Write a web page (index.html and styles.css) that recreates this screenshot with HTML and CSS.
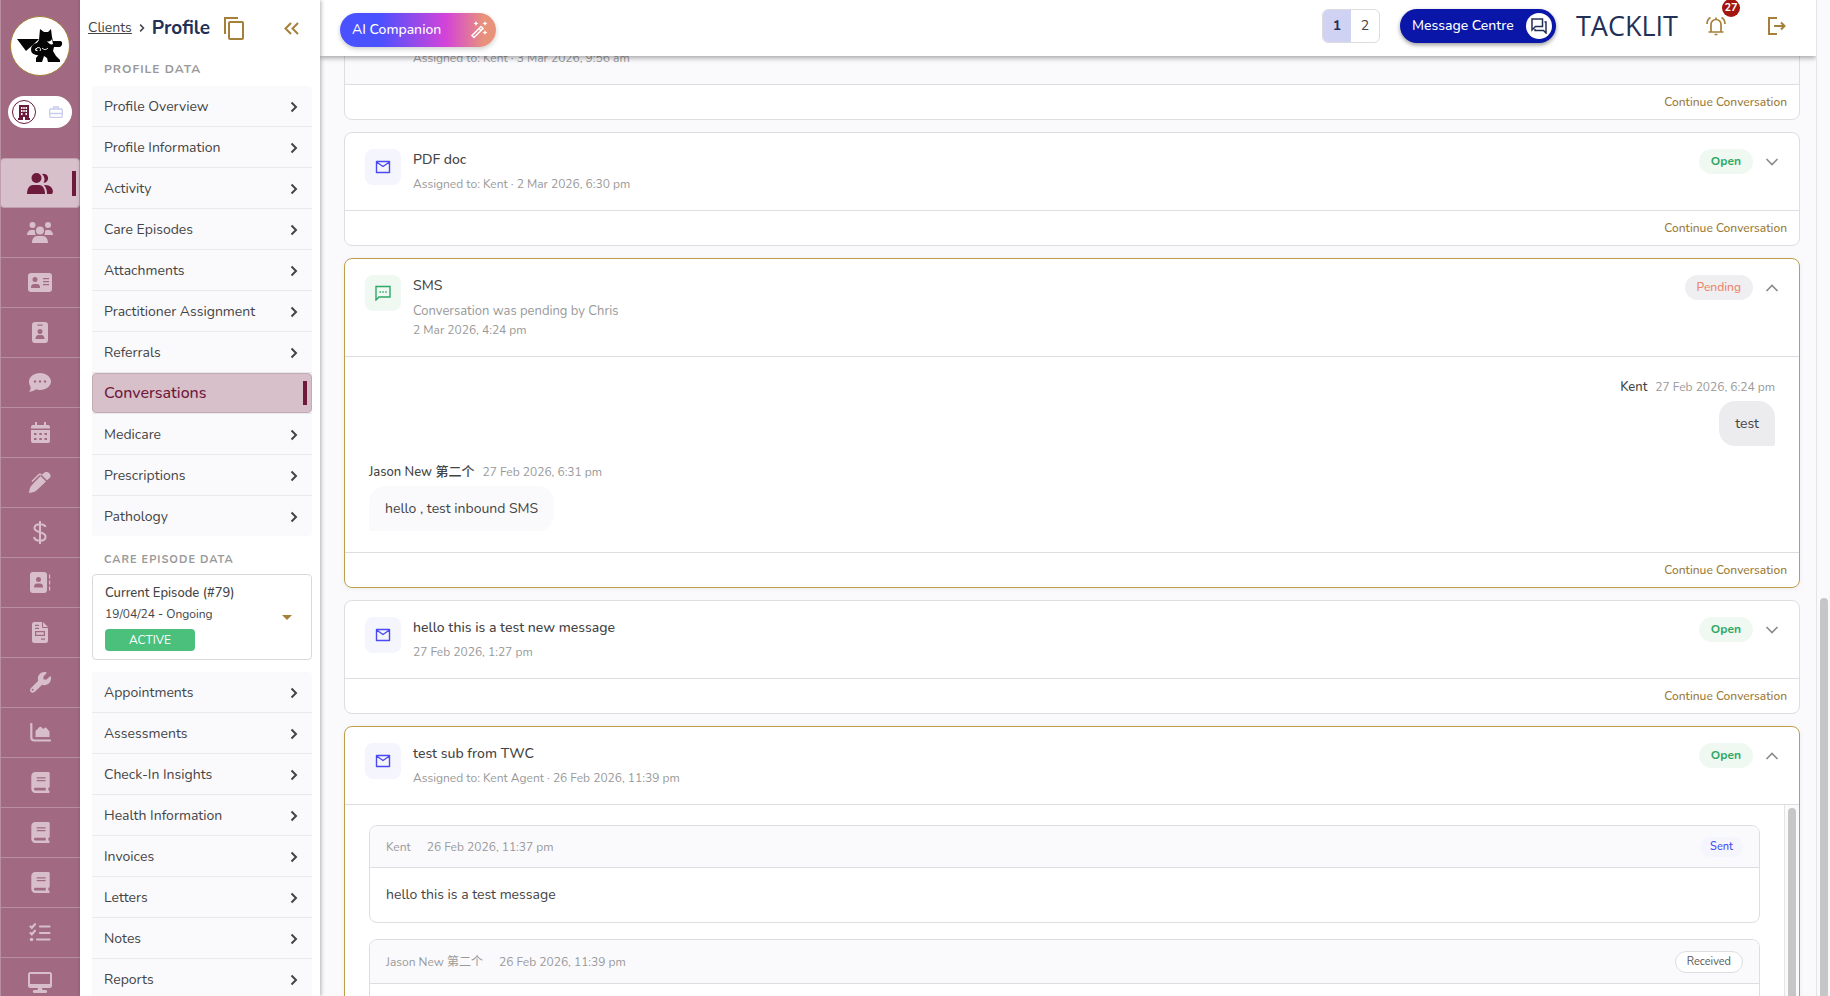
FILE: index.html
```
<!DOCTYPE html>
<html lang="en">
<head>
    <meta charset="utf-8" />
    <meta name="viewport" content="width=device-width, initial-scale=1.0">
    <title>Profile - Conversations</title>
    <link rel="stylesheet" href="styles.css">
</head>
<body>
    <!-- icons used more than once -->
    <svg class="sprite" aria-hidden="true">
        <symbol id="chevron" viewBox="0 0 8 12"><path d="M1.500 1.500 6 6l-4.500 4.500" fill="none" stroke="#444" stroke-width="2"/></symbol>
        <symbol id="mail" viewBox="0 0 16 16"><path d="M1.500 2.500h13v11h-13zM1.500 3l6.500 4.500L14.500 3" fill="none" stroke="#4a4af5" stroke-width="1.400" stroke-linejoin="round"/></symbol>
        <symbol id="down" viewBox="0 0 14 8"><path d="M1.500 1 7 6.500 12.500 1" fill="none" stroke="#8c8c8c" stroke-width="1.700"/></symbol>
        <symbol id="up" viewBox="0 0 14 8"><path d="M1.500 7 7 1.500 12.500 7" fill="none" stroke="#8c8c8c" stroke-width="1.700"/></symbol>
        <symbol id="book" viewBox="0 0 448 512"><path fill="currentColor" d="M96 0C43 0 0 43 0 96v320c0 53 43 96 96 96h320c18 0 32-14 32-32s-14-32-32-32v-64c18 0 32-14 32-32V32c0-18-14-32-32-32H96zm0 384h256v64H96c-18 0-32-14-32-32s14-32 32-32zm32-240c0-9 7-16 16-16h192c9 0 16 7 16 16s-7 16-16 16H144c-9 0-16-7-16-16zm16 48h192c9 0 16 7 16 16s-7 16-16 16H144c-9 0-16-7-16-16s7-16 16-16z"/></symbol>
    </svg>

    <nav class="rail">
        <a class="avatar" href="#" aria-label="Home">
            <svg width="46" height="34" viewBox="0 0 46 34">
                <path fill="#050505" d="M0 10h22L18 14l-9 8z"/>
                <path fill="#050505" d="M22 11 23 0l4 3h4l3-3 1 8 1 4h7c2 0 2.500 2 2 3.500-.500 2-2 2.500-3 2.500h-5l-1 4 3 5 4 4v2H31l-1-4-3-2-2 6h-6v-4l4-5-6-6z"/>
                <path fill="none" stroke="#050505" stroke-width="4" d="M24 16c-4-1-8 1-8 4.500s5 5 8 2"/>
                <path fill="none" stroke="#fff" d="M19 20c2-3 6-1 4 2M25 19c2 2 4 2 6 0"/>
                <path fill="#fff" d="M30 12c2 1 4 0 5-2l1 5c-2 1-4 0-6-3z"/>
            </svg>
        </a>
        <div class="switch">
            <button class="switch-btn on" aria-label="Organisation"><svg width="12" height="15" viewBox="0 0 12 15"><path fill="#6e1a3b" fill-rule="evenodd" d="M1 0h10v13h1v2H7v-3H5v3H0v-2h1zM3 2v2h1.500V2zm2.300 0v2h1.400V2zM7.500 2v2H9V2zM3 5v2h1.500V5zm2.300 0v2h1.400V5zM7.500 5v2H9V5zM3 8v2h1.500V8zm4.500 0v2H9V8z"/></svg></button>
            <button class="switch-btn" aria-label="Practice"><svg width="14" height="12" viewBox="0 0 14 12" fill="none" stroke="#c9cbef" stroke-width="1.300"><rect x=".7" y="3" width="12.600" height="8.300" rx="1"/><path d="M4.500 3V1h5v2M1 7.500h12"/></svg></button>
        </div>
        <ul class="rail-list">
            <li><a class="active" href="#" aria-label="Clients"><svg width="26" height="21" viewBox="0 0 26 21" fill="currentColor"><circle cx="9.500" cy="5" r="5"/><path d="M15 1a4.500 4.500 0 1 1 1.500 8.700A7 7 0 0 0 15 1zM0 21c0-5 2-9 6-9h6c4 0 6 4 6 9zm20 0c0-3-.500-6-3-9 6-.500 9 3 9 7l-1 2z"/></svg></a></li>
            <li><a href="#" aria-label="Groups"><svg width="26" height="21" viewBox="0 0 26 21" fill="currentColor"><circle cx="5.500" cy="3" r="3"/><circle cx="21" cy="3" r="3"/><circle cx="13" cy="8.500" r="4"/><path d="M0 13c0-3 2-5 4-5h3c1 0 1 1 1 1 0 2 0 3 1 4zm26 0c0-3-2-5-4-5h-3l-1 1c0 2 0 3-1 4zM5 21c0-4 2-7 5-7h6c3 0 5 3 5 7z"/></svg></a></li>
            <li><a href="#" aria-label="Contacts"><svg width="24" height="19" viewBox="0 0 24 19"><path fill="currentColor" fill-rule="evenodd" d="M3 0h18a3 3 0 0 1 3 3v13a3 3 0 0 1-3 3H3a3 3 0 0 1-3-3V3a3 3 0 0 1 3-3zm4 4a2.500 2.500 0 1 0 0 5 2.500 2.500 0 0 0 0-5zM3 15h9c0-3-1-4-3-4H6c-2 0-3 1-3 4zM15 5v1.200h6V5zm0 3v1.200h6V8zm0 3v1.200h6V11z"/></svg></a></li>
            <li><a href="#" aria-label="Practitioners"><svg width="16" height="21" viewBox="0 0 16 21"><path fill="currentColor" fill-rule="evenodd" d="M3 0h10a3 3 0 0 1 3 3v15a3 3 0 0 1-3 3H3a3 3 0 0 1-3-3V3a3 3 0 0 1 3-3zm2.500 2.500v1.200h5V2.500zM8 7a2.500 2.500 0 1 0 0 5 2.500 2.500 0 0 0 0-5zM3.500 17h9c0-2-1-4-3-4h-3c-2 0-3 2-3 4z"/></svg></a></li>
            <li><a href="#" aria-label="Messages"><svg width="22" height="19" viewBox="0 0 22 19"><path fill="currentColor" fill-rule="evenodd" d="M11 0c6 0 11 4 11 8.500S17 17 11 17c-1.500 0-3-.300-4-.800-2 1.500-4 2.500-7 2.500 1-1 2-3 1.500-5C.500 12 0 10.500 0 8.500 0 4 5 0 11 0zM6 7.300a1.200 1.200 0 1 0 0 2.500 1.200 1.200 0 0 0 0-2.500zm5 0a1.200 1.200 0 1 0 0 2.500 1.200 1.200 0 0 0 0-2.500zm5 0a1.200 1.200 0 1 0 0 2.500 1.200 1.200 0 0 0 0-2.500z"/></svg></a></li>
            <li><a href="#" aria-label="Calendar"><svg width="19" height="21" viewBox="0 0 19 21"><path fill="currentColor" fill-rule="evenodd" d="M4 0h2v3h7V0h2v3h2a2 2 0 0 1 2 2v1.500H0V5a2 2 0 0 1 2-2h2zM0 8h19v11a2 2 0 0 1-2 2H2a2 2 0 0 1-2-2zm3 3v2h2.500v-2zm5.300 0v2h2.500v-2zm5.200 0v2H16v-2zM3 16v2h2.500v-2zm5.300 0v2h2.500v-2zm5.200 0v2H16v-2z"/></svg></a></li>
            <li><a href="#" aria-label="Notes"><svg width="22" height="21" viewBox="0 0 22 21" fill="currentColor"><path d="M15 1c2-2 4-1 5.500.500S22 5 20.500 6L18 8.300 12.600 3zM11.500 4l5.500 5.500L8 18c-2 2-4 2.500-8 3 .500-4 1-6 3-8z"/><path d="M3 9.500 9.500 3c1-1 2-1 3 0" fill="none" stroke="currentColor" stroke-width="1.500"/></svg></a></li>
            <li><a href="#" aria-label="Billing"><svg width="14" height="23" viewBox="0 0 14 23"><path d="M7 0v23M12.500 6C12 4 10 3.200 7 3.200S1.500 4.500 1.500 7c0 5.500 11 3 11 8.500 0 3-2.500 4.300-5.500 4.300S1.500 18.500 1 16" fill="none" stroke="currentColor" stroke-width="2"/></svg></a></li>
            <li><a href="#" aria-label="Address book"><svg width="21" height="21" viewBox="0 0 21 21"><path fill="currentColor" fill-rule="evenodd" d="M3 0h11a3 3 0 0 1 3 3v15a3 3 0 0 1-3 3H3a3 3 0 0 1-3-3V3a3 3 0 0 1 3-3zm5.500 5a2.500 2.500 0 1 0 0 5 2.500 2.500 0 0 0 0-5zM4 15.500h9c0-3-1-4-3-4H7c-2 0-3 1-3 4zM19 2.500h1.200v4H19zm0 6h1.200v4H19zm0 6h1.200v4H19z"/></svg></a></li>
            <li><a href="#" aria-label="Invoices"><svg width="16" height="21" viewBox="0 0 16 21"><path fill="currentColor" fill-rule="evenodd" d="M2.500 0H10v4.500c0 1 .500 1.500 1.500 1.500H16v12.500a2.500 2.500 0 0 1-2.500 2.500h-11A2.500 2.500 0 0 1 0 18.500v-16A2.500 2.500 0 0 1 2.500 0zM11 0l5 5h-4.500a.5.5 0 0 1-.5-.5zM3 2.700v1.200h4V2.700zm0 3v1.200h4V5.700zm0 3.300v5h10V9zm1.200 1.200h7.600v2.600H4.200zM9 16.500v1.200h4v-1.200z"/></svg></a></li>
            <li><a href="#" aria-label="Settings"><svg width="21" height="21" viewBox="0 0 512 512"><path fill="currentColor" fill-rule="evenodd" d="M352 320c88 0 160-72 160-160 0-15-2-30-6-44-4-12-18-14-27-5l-68 68c-3 3-7 5-11 5h-56c-9 0-16-7-16-16v-56c0-4 2-8 5-11l68-68c9-9 7-23-5-27-14-4-29-6-44-6-88 0-160 72-160 160 0 19 3 37 9 54L19 396c-25 25-25 67 0 92s67 25 92 0l187-177c17 6 35 9 54 9zM64 456a24 24 0 1 1 0-48 24 24 0 0 1 0 48z"/></svg></a></li>
            <li><a href="#" aria-label="Analytics"><svg width="21" height="19" viewBox="0 0 21 19"><path fill="currentColor" d="M5.500 14V8l4-4c1-.700 2 0 2.500 1l1.500 1 1-1c1-.800 1.500-.500 2 0l3 3.500V14z"/><path d="M1.300 1v13.500c0 2 1 3 3 3H20" fill="none" stroke="currentColor" stroke-width="2.200" stroke-linecap="round"/></svg></a></li>
            <li><a href="#" aria-label="Library"><svg width="19" height="21"><use href="#book"/></svg></a></li>
            <li><a href="#" aria-label="Resources"><svg width="19" height="21"><use href="#book"/></svg></a></li>
            <li><a href="#" aria-label="Guides"><svg width="19" height="21"><use href="#book"/></svg></a></li>
            <li><a href="#" aria-label="Tasks"><svg width="22" height="19" viewBox="0 0 22 19" fill="none" stroke="currentColor" stroke-width="2.200" stroke-linecap="round"><path d="m1.500 3.500 1.300 1.300L6 1.200M1.500 10l1.300 1.300L6 7.700M11 3.500h9.500M11 10h9.500M8 16.500h12.500"/><path stroke-width="3.500" d="M2.500 16.500h.100"/></svg></a></li>
            <li><a href="#" aria-label="Devices"><svg width="24" height="21" viewBox="0 0 24 21"><path fill="currentColor" fill-rule="evenodd" d="M2.500 0h19A2.500 2.500 0 0 1 24 2.500v11a2.500 2.500 0 0 1-2.500 2.500H14l.500 2H18c1.500 0 1.500 3 0 3H6c-1.500 0-1.500-3 0-3h3.500l.500-2H2.500A2.500 2.500 0 0 1 0 13.500v-11A2.500 2.500 0 0 1 2.500 0zM2 2v10h20V2z"/></svg></a></li>
        </ul>
    </nav>

    <aside class="panel">
        <div class="crumbs">
            <a href="#">Clients</a>
            <svg width="6" height="10"><use href="#chevron"/></svg>
            <h1>Profile</h1>
            <button class="copy" aria-label="Copy"><svg width="20" height="23" viewBox="0 0 20 23" fill="none" stroke="#a5803a" stroke-width="2"><path d="M1 17V1h13"/><rect x="5" y="5" width="14" height="17" rx="1"/></svg></button>
            <button class="collapse" aria-label="Collapse"><svg width="15" height="13" viewBox="0 0 15 13" fill="none" stroke="#a5803a" stroke-width="2"><path d="M7 1 1.500 6.500 7 12M14 1 8.500 6.500 14 12"/></svg></button>
        </div>
        <h2>PROFILE DATA</h2>
        <ul class="menu">
            <li><a href="#">Profile Overview<svg width="8" height="12"><use href="#chevron"/></svg></a></li>
            <li><a href="#">Profile Information<svg width="8" height="12"><use href="#chevron"/></svg></a></li>
            <li><a href="#">Activity<svg width="8" height="12"><use href="#chevron"/></svg></a></li>
            <li><a href="#">Care Episodes<svg width="8" height="12"><use href="#chevron"/></svg></a></li>
            <li><a href="#">Attachments<svg width="8" height="12"><use href="#chevron"/></svg></a></li>
            <li><a href="#">Practitioner Assignment<svg width="8" height="12"><use href="#chevron"/></svg></a></li>
            <li><a href="#">Referrals<svg width="8" height="12"><use href="#chevron"/></svg></a></li>
            <li><a class="active" href="#">Conversations</a></li>
            <li><a href="#">Medicare<svg width="8" height="12"><use href="#chevron"/></svg></a></li>
            <li><a href="#">Prescriptions<svg width="8" height="12"><use href="#chevron"/></svg></a></li>
            <li><a href="#">Pathology<svg width="8" height="12"><use href="#chevron"/></svg></a></li>
        </ul>
        <h2 class="second">CARE EPISODE DATA</h2>
        <button class="episode">
            <span class="episode-text">
                <span class="episode-name">Current Episode (#79)</span>
                <span class="episode-date">19/04/24 - Ongoing</span>
                <span class="episode-status">ACTIVE</span>
            </span>
            <svg width="10" height="5" viewBox="0 0 10 5"><path d="M0 0h10L5 5z" fill="#a5803a"/></svg>
        </button>
        <ul class="menu">
            <li><a href="#">Appointments<svg width="8" height="12"><use href="#chevron"/></svg></a></li>
            <li><a href="#">Assessments<svg width="8" height="12"><use href="#chevron"/></svg></a></li>
            <li><a href="#">Check-In Insights<svg width="8" height="12"><use href="#chevron"/></svg></a></li>
            <li><a href="#">Health Information<svg width="8" height="12"><use href="#chevron"/></svg></a></li>
            <li><a href="#">Invoices<svg width="8" height="12"><use href="#chevron"/></svg></a></li>
            <li><a href="#">Letters<svg width="8" height="12"><use href="#chevron"/></svg></a></li>
            <li><a href="#">Notes<svg width="8" height="12"><use href="#chevron"/></svg></a></li>
            <li><a href="#">Reports<svg width="8" height="12"><use href="#chevron"/></svg></a></li>
        </ul>
    </aside>

    <main class="main">
        <header class="topbar">
            <button class="ai">AI Companion
                <svg width="18" height="18" viewBox="0 0 18 18" fill="none" stroke="#fff" stroke-width="1.500"><path d="m2 14.500 9-9 2 2-9 9zM9 7.500l2 2"/><path fill="#fff" stroke="none" d="m6 0 .8 1.700L8.500 2.500l-1.700.8L6 5l-.8-1.700-1.700-.8 1.700-.8zM15 0l.8 1.700 1.700.8-1.700.8L15 5l-.8-1.700-1.700-.8 1.700-.8zM15 9l.8 1.700 1.700.8-1.700.8L15 14l-.8-1.700-1.700-.8 1.700-.8z"/></svg>
            </button>
            <div class="pages">
                <button class="on">1</button>
                <button>2</button>
            </div>
            <button class="centre">Message Centre
                <span class="centre-icon"><svg width="16" height="16" viewBox="0 0 16 16" fill="none" stroke="#233056" stroke-width="1.500"><path d="M1 12V1h10.500v7.500H4.500zM13.500 4H15v11l-2.500-2.500H4V11"/></svg></span>
            </button>
            <span class="brand">TACKLIT</span>
            <button class="bell" aria-label="Notifications">
                <svg width="20" height="20" viewBox="0 0 20 20" fill="none" stroke="#a5803a" stroke-width="1.700"><path d="M2.500 16h15M5 16V8.500a5 5 0 0 1 10 0V16M10 1.500v2M1 8c0-3 1-5 3.500-6.500M19 8c0-3-1-5-3.500-6.500M8.500 18.500h3"/></svg>
                <span class="badge">27</span>
            </button>
            <button class="logout" aria-label="Log out"><svg width="18" height="18" viewBox="0 0 18 18" fill="none" stroke="#a5803a" stroke-width="2"><path d="M9 1H1v16h8M6 9h10M13 5.500 16.500 9 13 12.500"/></svg></button>
        </header>

        <div class="list">
            <article class="card unread">
                <div class="card-head">
                    <span class="kind"></span>
                    <div class="info">
                        <p>Assigned to: Kent · 3 Mar 2026, 9:56 am</p>
                    </div>
                </div>
                <div class="card-foot"><a href="#">Continue Conversation</a></div>
            </article>

            <article class="card">
                <div class="card-head">
                    <span class="kind mail"><svg width="16" height="16"><use href="#mail"/></svg></span>
                    <div class="info">
                        <h3>PDF doc</h3>
                        <p>Assigned to: Kent · 2 Mar 2026, 6:30 pm</p>
                    </div>
                    <span class="status open">Open</span>
                    <button class="toggle" aria-label="Expand"><svg width="14" height="8"><use href="#down"/></svg></button>
                </div>
                <div class="card-foot"><a href="#">Continue Conversation</a></div>
            </article>

            <article class="card expanded">
                <div class="card-head">
                    <span class="kind sms"><svg width="16" height="16" viewBox="0 0 16 16" fill="none" stroke="#2fa866" stroke-width="1.400"><path d="M1 15V1.500h14V12H4z"/><path d="M4.500 7H6M7.300 7h1.500M10.200 7h1.500" stroke-width="1.600"/></svg></span>
                    <div class="info">
                        <h3>SMS</h3>
                        <p class="event">Conversation was pending by Chris</p>
                        <p>2 Mar 2026, 4:24 pm</p>
                    </div>
                    <span class="status pending">Pending</span>
                    <button class="toggle" aria-label="Collapse"><svg width="14" height="8"><use href="#up"/></svg></button>
                </div>
                <div class="chat">
                    <div class="bubble-row mine">
                        <p class="who"><b>Kent</b>27 Feb 2026, 6:24 pm</p>
                        <p class="bubble">test</p>
                    </div>
                    <div class="bubble-row">
                        <p class="who"><b>Jason New 第二个</b>27 Feb 2026, 6:31 pm</p>
                        <p class="bubble">hello , test inbound SMS</p>
                    </div>
                </div>
                <div class="card-foot"><a href="#">Continue Conversation</a></div>
            </article>

            <article class="card">
                <div class="card-head">
                    <span class="kind mail"><svg width="16" height="16"><use href="#mail"/></svg></span>
                    <div class="info">
                        <h3>hello this is a test new message</h3>
                        <p>27 Feb 2026, 1:27 pm</p>
                    </div>
                    <span class="status open">Open</span>
                    <button class="toggle" aria-label="Expand"><svg width="14" height="8"><use href="#down"/></svg></button>
                </div>
                <div class="card-foot"><a href="#">Continue Conversation</a></div>
            </article>

            <article class="card expanded">
                <div class="card-head">
                    <span class="kind mail"><svg width="16" height="16"><use href="#mail"/></svg></span>
                    <div class="info">
                        <h3>test sub from TWC</h3>
                        <p>Assigned to: Kent Agent · 26 Feb 2026, 11:39 pm</p>
                    </div>
                    <span class="status open">Open</span>
                    <button class="toggle" aria-label="Collapse"><svg width="14" height="8"><use href="#up"/></svg></button>
                </div>
                <div class="thread">
                    <div class="mails">
                        <section class="email">
                            <div class="email-head"><span>Kent</span><span>26 Feb 2026, 11:37 pm</span><span class="tag sent">Sent</span></div>
                            <p>hello this is a test message</p>
                        </section>
                        <section class="email">
                            <div class="email-head tall"><span>Jason New 第二个</span><span>26 Feb 2026, 11:39 pm</span><span class="tag received">Received</span></div>
                            <p></p>
                        </section>
                    </div>
                    <div class="track"><div class="thumb"></div></div>
                </div>
            </article>
        </div>
    </main>
    <div class="track page-track"><div class="thumb"></div></div>
</body>
</html>
```

FILE: styles.css
```
* {
    box-sizing: border-box;
}
body {
    margin: 0;
    height: 100vh;
    overflow: hidden;
    display: flex;
    background: #fafafd;
    color: #444;
    font-family: Nunito, Lato, "Noto Sans CJK SC", sans-serif;
    font-size: 14px;
    line-height: 20px;
}
h1, h2, h3, p, ul {
    margin: 0;
    padding: 0;
}
ul {
    list-style: none;
}
a {
    color: inherit;
    text-decoration: none;
}
button {
    font: inherit;
    color: inherit;
    border: 0;
    padding: 0;
    background: none;
    cursor: pointer;
}
svg {
    display: block;
    flex: none;
}
.sprite {
    display: none;
}

/* icon rail */
.rail {
    width: 80px;
    flex: none;
    background: #a16a82;
    box-shadow: inset 1px 0 #b88fa1;
    overflow: hidden;
}
.avatar {
    display: flex;
    align-items: center;
    justify-content: center;
    width: 60px;
    height: 60px;
    margin: 16px auto 0;
    border: 1px solid #a5803a;
    border-radius: 50%;
    background: #fff;
}
.switch {
    display: flex;
    justify-content: space-between;
    width: 64px;
    height: 32px;
    margin: 20px auto 30px;
    padding: 4px;
    border-radius: 16px;
    background: #fff;
}
.switch-btn {
    display: flex;
    align-items: center;
    justify-content: center;
    width: 24px;
    height: 24px;
    border-radius: 50%;
}
.switch-btn.on {
    border: 1px solid #6e1a3b;
}
.rail-list a {
    display: flex;
    align-items: center;
    justify-content: center;
    height: 50px;
    border-bottom: 1px solid #b88fa1;
    color: #d8becb;
}
.rail-list a.active {
    border: 1px solid #c0a0ae;
    border-radius: 4px;
    background: linear-gradient(#6e1a3b, #6e1a3b) right 3px center / 4px 25px no-repeat #d8c0cb;
    color: #6e1a3b;
}

/* profile menu */
.panel {
    width: 240px;
    flex: none;
    padding: 0 8px 0 12px;
    background: #fff;
    box-shadow: 1px 0 4px rgba(0, 0, 0, .3);
    overflow: hidden;
    z-index: 2;
}
.crumbs {
    display: flex;
    align-items: center;
    height: 56px;
    margin-left: -4px;
    gap: 7px;
}
.crumbs a {
    font-size: 14px;
    text-decoration: underline;
}
.crumbs h1 {
    color: #233056;
    font-size: 19px;
    line-height: 24px;
}
.copy {
    margin-left: 7px;
}
.collapse {
    margin: 0 13px 0 auto;
}
.panel h2 {
    height: 30px;
    padding: 3px 12px;
    color: #999;
    font-size: 12px;
    letter-spacing: 1px;
}
.panel h2.second {
    margin-top: 13px;
    height: 25px;
    padding-top: 1px;
    font-size: 11px;
}
.menu {
    border-radius: 4px;
    background: #fafafd;
}
.menu li {
    border-bottom: 1px solid #e9e9ec;
}
.menu li:last-child {
    border-bottom: 0;
}
.menu a {
    display: flex;
    align-items: center;
    justify-content: space-between;
    height: 40px;
    padding: 1px 14px 0 12px;
    font-size: 14px;
}
.menu a.active {
    border: 1px solid #c3abb5;
    border-radius: 4px;
    padding: 0 0 0 11px;
    background: linear-gradient(#6e1a3b, #6e1a3b) right 4px center / 4px 24px no-repeat #d8c0cb;
    color: #6e1a3b;
    font-size: 16px;
    font-weight: 500;
}
.episode {
    display: flex;
    align-items: center;
    justify-content: space-between;
    width: 100%;
    margin-bottom: 12px;
    padding: 8px 19px 8px 12px;
    border: 1px solid #d9d9d9;
    border-radius: 4px;
    background: #fff;
    text-align: left;
}
.episode-text {
    display: flex;
    flex-direction: column;
}
.episode-name {
    font-size: 13px;
    font-weight: 500;
}
.episode-date {
    font-size: 12px;
    line-height: 22px;
}
.episode-status {
    width: 90px;
    margin-top: 4px;
    border-radius: 4px;
    background: #4bc07d;
    color: #fff;
    font-size: 12px;
    line-height: 22px;
    text-align: center;
}

/* top bar */
.main {
    flex: 1;
    min-width: 0;
    height: 100vh;
    display: flex;
    flex-direction: column;
    overflow: hidden;
}
.topbar {
    display: flex;
    align-items: center;
    flex: none;
    height: 56px;
    padding: 0 30px 4px 20px;
    background: #fff;
    box-shadow: 0 2px 5px rgba(0, 0, 0, .35);
    z-index: 1;
}
.ai {
    display: flex;
    align-items: center;
    justify-content: space-between;
    width: 156px;
    height: 34px;
    margin: 8px auto 0 0;
    padding: 0 8px 0 12px;
    border-radius: 17px;
    background: linear-gradient(90deg, #4a51ff 25%, #d443d8 68%, #e8927c 92%);
    box-shadow: 0 2px 5px rgba(0, 0, 0, .2);
    color: #fff;
    font-weight: 500;
}
.pages {
    display: flex;
    height: 34px;
    border: 1px solid #dcdcdf;
    border-radius: 6px;
    overflow: hidden;
}
.pages button {
    width: 28px;
}
.pages button.on {
    background: #cfd2f3;
    color: #233056;
    font-weight: bold;
}
.centre {
    display: flex;
    align-items: center;
    justify-content: space-between;
    width: 156px;
    height: 34px;
    margin: 0 20px;
    padding: 0 4px 0 12px;
    border-radius: 17px;
    background: #0a16a8;
    box-shadow: 0 2px 4px rgba(0, 0, 0, .4);
    color: #fff;
    font-weight: 500;
}
.centre-icon {
    display: flex;
    align-items: center;
    justify-content: center;
    width: 26px;
    height: 26px;
    border-radius: 50%;
    background: #fff;
}
.brand {
    width: 100px;
    color: #233056;
    font-family: "Open Sans", sans-serif;
    font-size: 27px;
    font-weight: 500;
    line-height: 32px;
}
.bell {
    position: relative;
    margin: 0 42px 0 30px;
}
.badge {
    position: absolute;
    top: -17px;
    right: -14px;
    width: 18px;
    height: 18px;
    border-radius: 50%;
    background: #a3150f;
    color: #fff;
    font-size: 11px;
    font-weight: bold;
    line-height: 18px;
}

/* conversations, scrolled part of the way down */
.list {
    display: flex;
    flex-direction: column;
    gap: 12px;
    margin-top: -51px;
    padding: 0 16px 0 24px;
}
.card {
    flex: none;
    border: 1px solid #dedee1;
    border-radius: 8px;
    background: #fff;
    overflow: hidden;
}
.card.expanded {
    border-color: #bd9f4b;
    box-shadow: 0 1px 5px rgba(0, 0, 0, .06);
}
.card.unread .card-head {
    align-items: flex-end;
    height: 78px;
    background: #fafafd;
}
.card-head {
    display: flex;
    align-items: flex-start;
    padding: 16px 20px 17px;
}
.kind {
    display: flex;
    align-items: center;
    justify-content: center;
    width: 36px;
    height: 36px;
    margin-right: 12px;
    border-radius: 8px;
}
.kind.mail {
    background: #f5f6fd;
}
.kind.sms {
    background: #eff9f2;
}
.info {
    flex: 1;
}
.info h3 {
    font-size: 14px;
    font-weight: 500;
    line-height: 22px;
    margin-bottom: 4px;
}
.info p {
    color: #999;
    font-size: 12px;
    line-height: 18px;
}
.info p.event {
    font-size: 13px;
    line-height: 20px;
}
.status {
    padding: 0 12px;
    border-radius: 13px;
    font-size: 12px;
    font-weight: bold;
    line-height: 25px;
}
.status.open {
    background: #eff9f2;
    color: #2fa866;
}
.status.pending {
    background: #efeff2;
    color: #ec8468;
    font-weight: 500;
}
.toggle {
    margin: 9px 0 0 12px;
}
.card-foot {
    padding: 8px 12px;
    border-top: 1px solid #dedee1;
    color: #9a7a35;
    font-size: 12px;
    font-weight: 500;
    line-height: 18px;
    text-align: right;
}
.chat {
    display: flex;
    flex-direction: column;
    gap: 16px;
    padding: 20px 24px 21px;
    border-top: 1px solid #dedee1;
}
.bubble-row {
    display: flex;
    flex-direction: column;
    align-items: flex-start;
}
.bubble-row.mine {
    align-items: flex-end;
}
.who {
    color: #999;
    font-size: 12px;
}
.who b {
    margin-right: 8px;
    color: #444;
    font-size: 13px;
    font-weight: 500;
}
.bubble {
    margin-top: 4px;
    padding: 12px 16px;
    border-radius: 16px 16px 16px 2px;
    background: #fafafd;
    line-height: 21px;
}
.mine .bubble {
    border-radius: 16px 16px 2px 16px;
    background: #ececef;
}
.thread {
    display: flex;
    border-top: 1px solid #dedee1;
}
.mails {
    flex: 1;
    display: flex;
    flex-direction: column;
    gap: 16px;
    padding: 20px 24px;
}
.email {
    border: 1px solid #dedee1;
    border-radius: 8px;
    overflow: hidden;
}
.email-head {
    display: flex;
    align-items: center;
    gap: 16px;
    height: 42px;
    padding: 0 16px;
    border-bottom: 1px solid #dedee1;
    background: #fafafd;
    color: #999;
    font-size: 12px;
}
.email-head.tall {
    height: 44px;
}
.email p {
    padding: 17px 16px;
}
.tag {
    margin-left: auto;
    border-radius: 12px;
    font-size: 11px;
    line-height: 20px;
}
.tag.sent {
    padding: 0 10px;
    background: #f5f6fd;
    color: #4a4af5;
    font-weight: 500;
}
.tag.received {
    padding: 0 11px;
    border: 1px solid #dedee1;
    background: #fff;
    color: #555;
}

/* scrollbars */
.track {
    flex: none;
    width: 15px;
    padding: 3px 3px 0;
    border-left: 1px solid #e4e4e7;
    background: #fafafd;
}
.thumb {
    width: 8px;
    height: 100%;
    border-radius: 4px 4px 0 0;
    background: #c6c6c6;
}
.page-track {
    display: flex;
    align-items: flex-end;
    width: 14px;
    padding: 0 2px 0 3px;
}
.page-track .thumb {
    height: 40%;
}
```
